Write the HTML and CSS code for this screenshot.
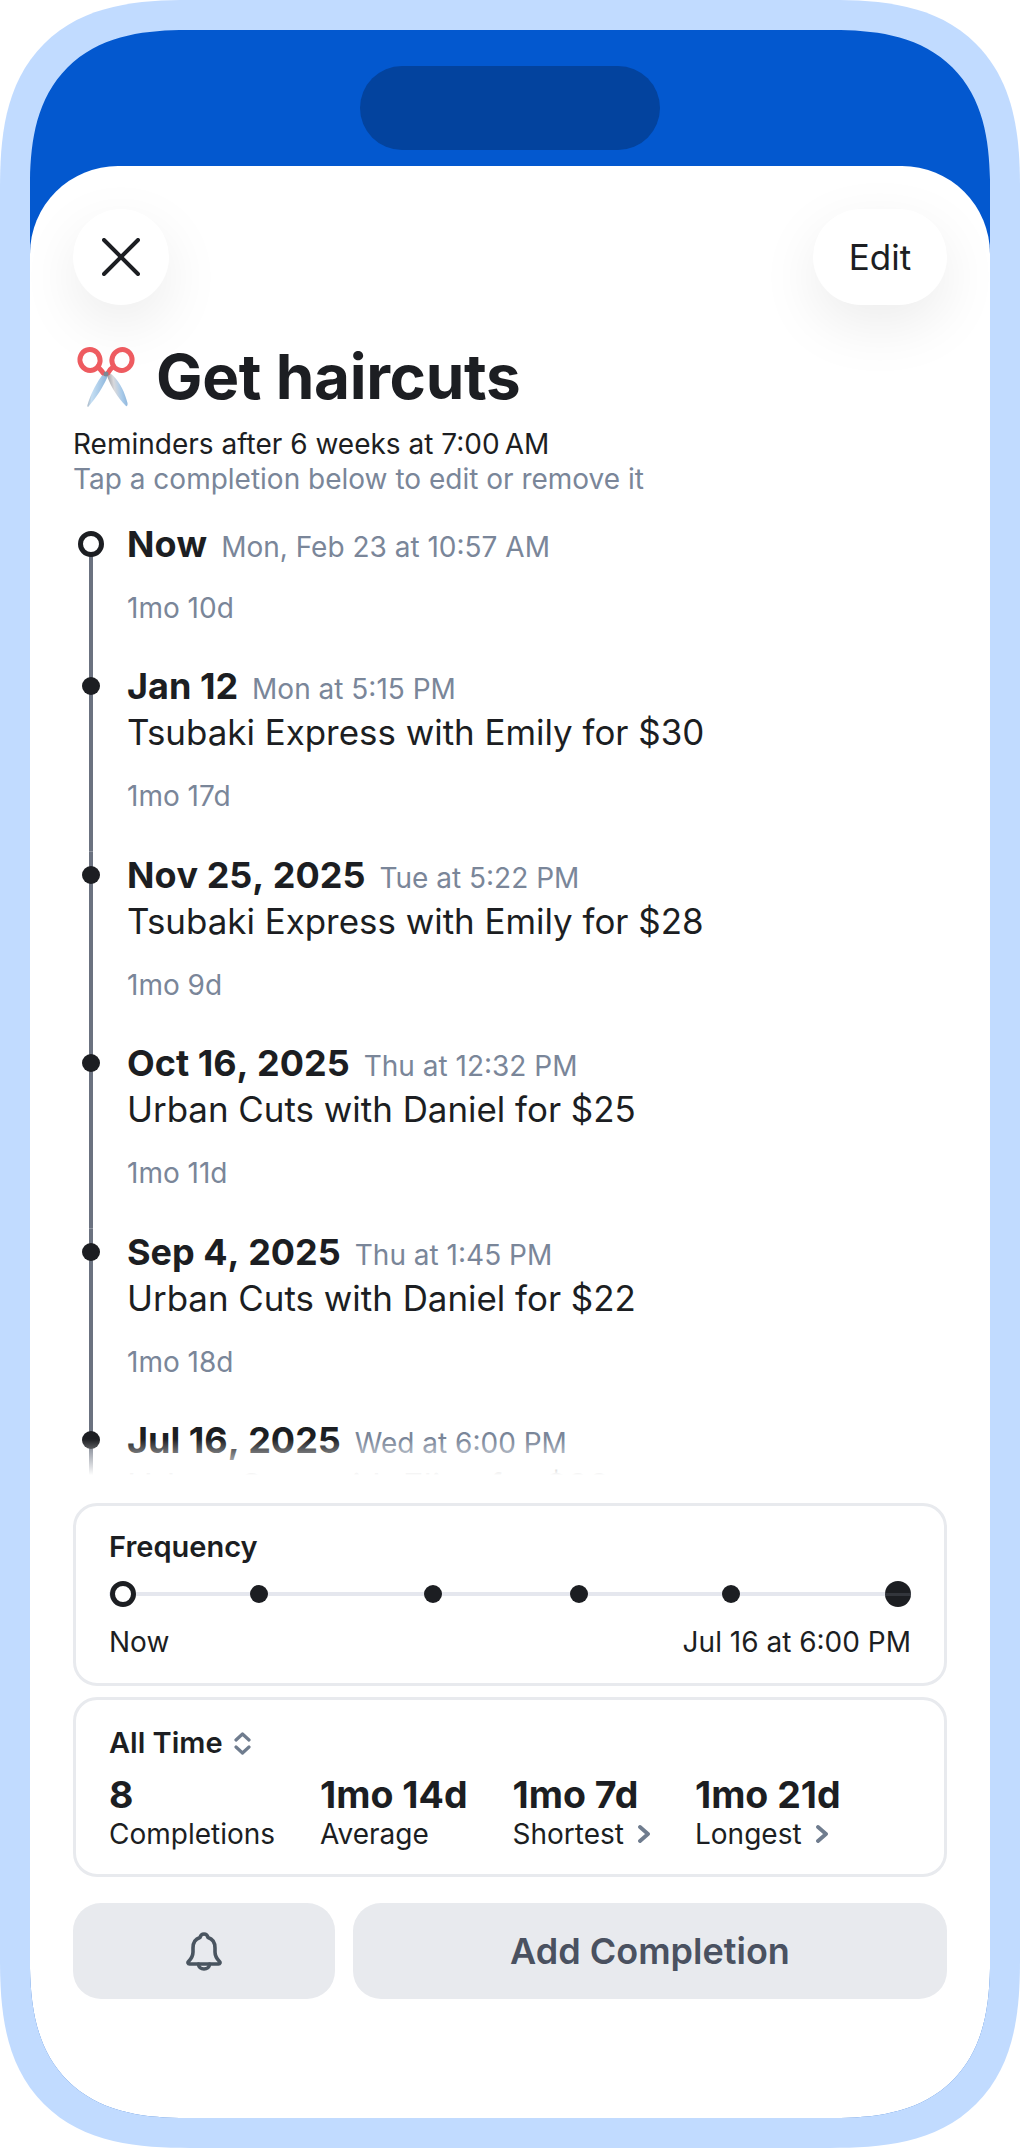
FILE: index.html
```html
<!DOCTYPE html>
<html lang="en">
<head>
    <meta charset="UTF-8">
    <meta name="viewport" content="width=device-width, initial-scale=1.0">
    <title>Get haircuts</title>
    <link rel="stylesheet" href="styles.css">
</head>
<body>
    <div class="phone">
        <div class="island"></div>
        <div class="sheet">
            <div class="topbar">
                <div class="round_btn close_btn">
                    <svg width="38" height="38" viewBox="0 0 38 38" fill="none" stroke="#1c1e22" stroke-width="4" stroke-linecap="round"><path d="M2 2L36 36M36 2L2 36"/></svg>
                </div>
                <div class="round_btn edit_btn">Edit</div>
            </div>

            <div class="title_row">
                <svg class="scissors" width="60" height="62" viewBox="0 0 60 62" fill="none">
                    <defs>
                        <linearGradient id="blade_l" x1="0" y1="0" x2="1" y2="0.2">
                            <stop offset="0" stop-color="#8f8f96"/>
                            <stop offset="0.35" stop-color="#c4def3"/>
                            <stop offset="1" stop-color="#8db6dc"/>
                        </linearGradient>
                        <linearGradient id="blade_r" x1="0" y1="0.2" x2="1" y2="0">
                            <stop offset="0" stop-color="#9a9a9f"/>
                            <stop offset="0.3" stop-color="#d9d9dc"/>
                            <stop offset="0.6" stop-color="#a9cbea"/>
                            <stop offset="1" stop-color="#7fa9d2"/>
                        </linearGradient>
                    </defs>
                    <path d="M27 28C21 36 15 47 11.500 59C11 61 12 61.500 13 60C20 52 27 41 31 32C31.500 29 29 26 27 28Z" fill="url(#blade_l)"/>
                    <path d="M31 30C33 27.500 35 27.500 37 29.500C44 36 49 47 51.500 57C52 60 50.500 61 49.500 59.500C42 52 35 41 31 30Z" fill="url(#blade_r)"/>
                    <g stroke="#ee5b60" stroke-width="5">
                        <ellipse cx="14" cy="14" rx="10" ry="10.500" transform="rotate(-20 14 14)"/>
                        <ellipse cx="46" cy="14" rx="10" ry="10.500" transform="rotate(25 46 14)"/>
                        <path d="M22 21C24 23 26 25 27 27M37 21C34 23 33 25 32 27" stroke-linecap="round"/>
                    </g>
                    <circle cx="30" cy="28" r="2.500" fill="#7c8894"/>
                </svg>
                <h1 class="title">Get haircuts</h1>
            </div>
            <div class="subtitle">Reminders after 6 weeks at 7:00&#8239;AM</div>
            <div class="hint">Tap a completion below to edit or remove it</div>

            <div class="timeline">
                <div class="item item_now">
                    <div class="rail"><span class="dot_open"></span></div>
                    <div class="item_main">
                        <div class="item_head"><b>Now</b><span class="meta">Mon, Feb 23 at 10:57 AM</span></div>
                        <div class="gap_text">1mo 10d</div>
                    </div>
                </div>
                <div class="item">
                    <div class="rail"><span class="dot"></span></div>
                    <div class="item_main">
                        <div class="item_head"><b>Jan 12</b><span class="meta">Mon at 5:15 PM</span></div>
                        <div class="item_body">Tsubaki Express with Emily for $30</div>
                        <div class="gap_text">1mo 17d</div>
                    </div>
                </div>
                <div class="item">
                    <div class="rail"><span class="dot"></span></div>
                    <div class="item_main">
                        <div class="item_head"><b>Nov 25, 2025</b><span class="meta">Tue at 5:22 PM</span></div>
                        <div class="item_body">Tsubaki Express with Emily for $28</div>
                        <div class="gap_text">1mo 9d</div>
                    </div>
                </div>
                <div class="item">
                    <div class="rail"><span class="dot"></span></div>
                    <div class="item_main">
                        <div class="item_head"><b>Oct 16, 2025</b><span class="meta">Thu at 12:32 PM</span></div>
                        <div class="item_body">Urban Cuts with Daniel for $25</div>
                        <div class="gap_text">1mo 11d</div>
                    </div>
                </div>
                <div class="item">
                    <div class="rail"><span class="dot"></span></div>
                    <div class="item_main">
                        <div class="item_head"><b>Sep 4, 2025</b><span class="meta">Thu at 1:45 PM</span></div>
                        <div class="item_body">Urban Cuts with Daniel for $22</div>
                        <div class="gap_text">1mo 18d</div>
                    </div>
                </div>
                <div class="item">
                    <div class="rail"><span class="dot"></span></div>
                    <div class="item_main">
                        <div class="item_head"><b>Jul 16, 2025</b><span class="meta">Wed at 6:00 PM</span></div>
                        <div class="item_body">Urban Cuts with Eliza for $22</div>
                    </div>
                </div>
            </div>

            <div class="card freq_card">
                <div class="card_title">Frequency</div>
                <div class="track">
                    <span class="dot_open"></span>
                    <span class="dot"></span>
                    <span class="dot"></span>
                    <span class="dot"></span>
                    <span class="dot"></span>
                    <span class="dot_big"></span>
                </div>
                <div class="track_labels"><span>Now</span><span>Jul 16 at 6:00 PM</span></div>
            </div>

            <div class="card stats_card">
                <div class="card_title">All Time
                    <svg width="17" height="23" viewBox="0 0 17 23" fill="none" stroke="#6f7c8e" stroke-width="3.200" stroke-linecap="round" stroke-linejoin="round"><path d="M2 8L8.500 2L15 8M2 15L8.500 21L15 15"/></svg>
                </div>
                <div class="stats">
                    <div class="stat"><b>8</b><span>Completions</span></div>
                    <div class="stat"><b>1mo 14d</b><span>Average</span></div>
                    <div class="stat"><b>1mo 7d</b><span>Shortest
                        <svg width="12" height="18" viewBox="0 0 12 18" fill="none" stroke="#6f7c8e" stroke-width="3.800" stroke-linecap="round" stroke-linejoin="round"><path d="M2 2L10 9L2 16"/></svg>
                    </span></div>
                    <div class="stat"><b>1mo 21d</b><span>Longest
                        <svg width="12" height="18" viewBox="0 0 12 18" fill="none" stroke="#6f7c8e" stroke-width="3.800" stroke-linecap="round" stroke-linejoin="round"><path d="M2 2L10 9L2 16"/></svg>
                    </span></div>
                </div>
            </div>

            <div class="actions">
                <div class="action bell_btn">
                    <svg width="36" height="39" viewBox="0 0 36 39" fill="none" stroke="#4a5560" stroke-width="3.600" stroke-linecap="round" stroke-linejoin="round"><path d="M18 2C20 2 21.500 3.500 22 5.500C27 7 29 11 29 16V20C29 24 31 27 33.500 29.500C34.500 30.500 34 32 32.500 32H3.500C2 32 1.500 30.500 2.500 29.500C5 27 7 24 7 20V16C7 11 9 7 14 5.500C14.500 3.500 16 2 18 2Z"/><path d="M12.500 32C12.500 35 15 37 18 37C21 37 23.500 35 23.500 32"/></svg>
                </div>
                <div class="action add_btn">Add Completion</div>
            </div>
        </div>
    </div>
</body>
</html>
```
FILE: styles.css
```css
*{margin:0;padding:0;box-sizing:border-box;}
html,body{width:100%;height:100%;background:#fff;}
body{font-family:"Inter","Liberation Sans",sans-serif;color:#1c1e22;}

.phone{
    width:1020px;
    height:2148px;
    border:30px solid #c1dbff;
    border-radius:190px;
    corner-shape:superellipse(1.4);
    background:#0358cf;
    overflow:hidden;
    display:flex;
    flex-direction:column;
}
.island{
    width:300px;
    height:84px;
    margin:36px auto 16px;
    flex:none;
    border-radius:42px;
    background:#03439e;
}
.sheet{
    flex:1;
    background:#fff;
    border-radius:88px 88px 0 0;
    padding:43px 43px 0;
}

/* header */
.topbar{display:flex;justify-content:space-between;}
.round_btn{
    height:96px;
    border-radius:48px;
    background:#fff;
    box-shadow:0 20px 60px rgba(0,0,0,0.08);
    display:flex;
    align-items:center;
    justify-content:center;
}
.close_btn{width:96px;}
.edit_btn{width:134px;font-size:35px;}
.title_row{display:flex;align-items:center;gap:20px;margin-top:38px;height:68px;padding-left:3px;}
.title{font-size:62px;line-height:68px;font-weight:700;letter-spacing:-0.3px;}
.subtitle{font-size:28px;line-height:35px;margin-top:16px;}
.hint{font-size:28px;line-height:35px;color:#7a8699;}

/* timeline */
.timeline{height:956px;margin-top:24px;overflow:hidden;position:relative;}
.timeline::after{
    content:"";
    position:absolute;
    left:0;
    right:0;
    bottom:0;
    height:38px;
    background:linear-gradient(rgba(255,255,255,0),#fff 95%);
}
.item{display:flex;gap:18px;}
.rail{
    width:36px;
    flex:none;
    display:flex;
    justify-content:center;
    background:linear-gradient(#6b7280,#6b7280) center/4px 100% no-repeat;
}
.item_now .rail{background-position:center bottom;background-size:4px calc(100% - 30px);}
.dot{width:18px;height:18px;border-radius:50%;background:#1c1e22;flex:none;}
.rail .dot{margin-top:14px;}
.dot_open{width:26px;height:26px;border-radius:50%;border:5px solid #1c1e22;background:#fff;flex:none;}
.rail .dot_open{margin-top:10px;}
.dot_big{
    width:26px;
    height:26px;
    border-radius:50%;
    background:linear-gradient(#33363c,#33363c) center/100% 3px no-repeat,#1c1e22;
    flex:none;
}
.item_main{flex:1;padding-bottom:37.5px;}
.item_now .item_main{padding-bottom:37px;}
.item_head{display:flex;align-items:baseline;gap:14px;height:46px;line-height:46px;}
.item_head b{font-size:36px;font-weight:700;font-kerning:none;}
.meta{font-size:28px;color:#7a8699;}
.item_body{font-size:34.9px;line-height:46px;}
.gap_text{font-size:28px;line-height:36px;margin-top:23px;color:#7a8699;}

/* cards */
.card{border:3px solid #e8eaee;border-radius:24px;padding:0 33px;}
.freq_card{height:183px;margin-top:26px;padding-top:24px;}
.stats_card{height:180px;margin-top:11px;padding-top:26px;}
.card_title{font-size:29px;line-height:34px;font-weight:600;display:flex;align-items:center;gap:11px;}
.track{
    display:flex;
    align-items:center;
    height:26px;
    margin-top:17px;
    background:linear-gradient(#e5e7ee,#e5e7ee) center/100% 4px no-repeat;
}
/* dots sit at the time of each completion, so spacing is uneven */
.track span:nth-child(1){margin-left:1px;}
.track span:nth-child(2){margin-left:114px;}
.track span:nth-child(3){margin-left:156px;}
.track span:nth-child(4){margin-left:128px;}
.track span:nth-child(5){margin-left:134px;}
.track span:nth-child(6){margin-left:145px;}
.track_labels{display:flex;justify-content:space-between;font-size:28px;line-height:34px;margin-top:18px;}
.stats{display:flex;gap:45px;margin-top:13px;}
.stat{display:flex;flex-direction:column;}
.stat b{font-size:37.5px;line-height:44px;font-weight:700;}
.stat span{font-size:28px;line-height:34px;display:flex;align-items:center;gap:14px;}

/* bottom buttons */
.actions{display:flex;gap:18px;margin-top:26px;}
.action{
    height:96px;
    border-radius:28px;
    background:#e8eaee;
    display:flex;
    align-items:center;
    justify-content:center;
}
.bell_btn{width:262px;}
.add_btn{flex:1;font-size:36px;font-weight:600;color:#4a5160;}
```
